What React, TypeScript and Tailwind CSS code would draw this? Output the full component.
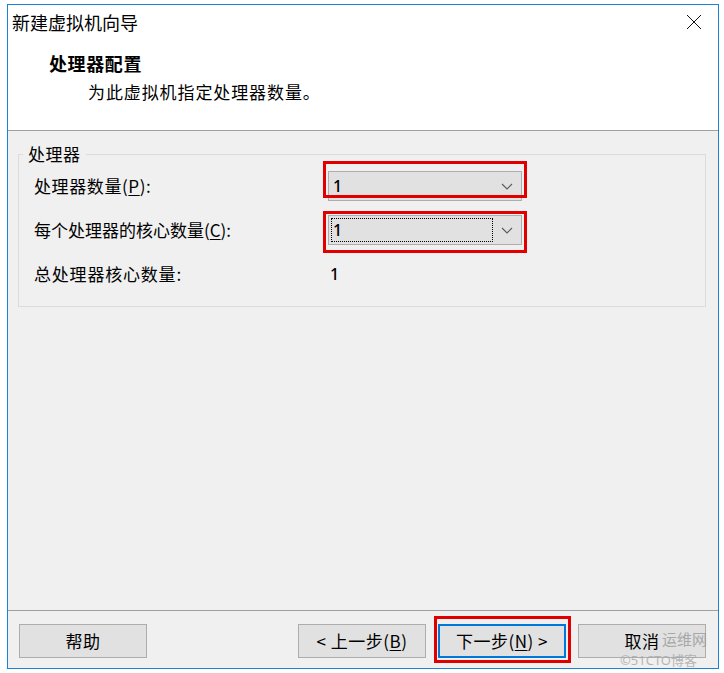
import React from "react";

const CJK = { fontFamily: "'Noto Sans CJK SC', 'Noto Sans', sans-serif" };
const LAT = { fontFamily: "'Noto Sans', 'Noto Sans CJK SC', sans-serif" };

function Chevron() {
  return (
    <svg width="12" height="7" viewBox="0 0 12 7" className="shrink-0">
      <polyline points="1,1 6,6 11,1" fill="none" stroke="#5a5a5a" strokeWidth="1.1" />
    </svg>
  );
}

function Combo({ focused }: { focused?: boolean }) {
  return (
    <div className="flex h-[30px] w-[194px] items-center border border-[#adadad] bg-[#e1e1e1]">
      {focused ? (
        <div className="ml-[2px] flex h-[24px] w-[162px] items-center border border-dotted border-black pl-[1px]">
          <span className="text-[16px] font-medium leading-none text-black" style={LAT}>1</span>
        </div>
      ) : (
        <div className="ml-[4px] flex h-[24px] w-[160px] items-center">
          <span className="text-[16px] font-medium leading-none text-black" style={LAT}>1</span>
        </div>
      )}
      <div className="flex flex-1 items-center justify-center pr-[1px]">
        <Chevron />
      </div>
    </div>
  );
}

function Btn({ children, primary }: { children: React.ReactNode; primary?: boolean }) {
  return (
    <div
      className={
        "flex h-[34px] w-[128px] items-center justify-center bg-[#e1e1e1] text-[17px] tracking-[0.5px] text-black " +
        (primary ? "border-2 border-[#0078d7]" : "border border-[#adadad]")
      }
      style={CJK}
    >
      {children}
    </div>
  );
}

export default function App() {
  return (
    <div className="h-[673px] w-[724px] bg-white pl-[7px] pt-[4px]" style={CJK}>
      <div className="flex h-[665px] w-[712px] flex-col border border-[#1883d7] bg-[#f0f0f0]">
        {/* header */}
        <div className="h-[126px] shrink-0 border-b border-[#a0a0a0] bg-white pt-[5px]">
          <div className="flex items-center justify-between pl-[4px] pr-[16px]">
            <span className="text-[18px] leading-[24px] text-black">新建虚拟机向导</span>
            <svg width="16" height="16" viewBox="0 0 16 16">
              <line x1="1" y1="1" x2="15" y2="15" stroke="#111" strokeWidth="1" />
              <line x1="15" y1="1" x2="1" y2="15" stroke="#111" strokeWidth="1" />
            </svg>
          </div>
          <div className="mt-[17px] pl-[41px] text-[18px] font-bold leading-[24px] tracking-[0.6px] text-black">处理器配置</div>
          <div className="mt-[5px] pl-[80px] text-[17px] leading-[24px] tracking-[0.9px] text-black">为此虚拟机指定处理器数量。</div>
        </div>

        {/* body */}
        <div className="flex flex-1 flex-col">
          <fieldset className="ml-[10px] mr-[12px] mt-[11px] border border-[#dcdcdc] px-0 pb-[17px] pt-[5px]">
            <legend className="ml-[4px] px-[5px] text-[17px] leading-[24px] tracking-[0.5px] text-black">处理器</legend>
            <div className="flex flex-col gap-[14px] pl-[15px]">
              <div className="flex h-[30px] items-center">
                <div className="w-[294px] text-[17px] tracking-[0.6px] text-black">
                  处理器数量(<span className="underline underline-offset-2">P</span>):
                </div>
                <div className="relative">
                  <Combo />
                  <div className="pointer-events-none absolute left-[-5px] top-[-10px] h-[37px] w-[204px] border-[3px] border-[#e00000]" />
                </div>
              </div>
              <div className="flex h-[30px] items-center">
                <div className="w-[294px] text-[17px] text-black">
                  每个处理器的核心数量(<span className="underline underline-offset-2">C</span>):
                </div>
                <div className="relative">
                  <Combo focused />
                  <div className="pointer-events-none absolute left-[-5px] top-[-4px] h-[42px] w-[204px] border-[3px] border-[#e00000]" />
                </div>
              </div>
              <div className="flex h-[30px] items-center">
                <div className="w-[296px] text-[17px] tracking-[0.8px] text-black">总处理器核心数量:</div>
                <span className="text-[16px] font-medium text-black" style={LAT}>1</span>
              </div>
            </div>
          </fieldset>

          <div className="flex-1" />

          {/* footer */}
          <div className="flex items-start border-t border-[#a0a0a0] pb-[10px] pl-[11px] pr-[12px] pt-[13px]">
            <Btn>帮助</Btn>
            <div className="flex-1" />
            <div className="flex gap-[12px]">
              <Btn>
                &lt; 上一步(<span className="underline underline-offset-2">B</span>)
              </Btn>
              <div className="relative">
                <Btn primary>
                  下一步(<span className="underline underline-offset-2">N</span>) &gt;
                </Btn>
                <div className="pointer-events-none absolute left-[-4px] top-[-8px] h-[47px] w-[137px] border-[3px] border-[#e00000]" />
              </div>
              <div className="relative">
                <Btn>取消</Btn>
                <div className="pointer-events-none absolute left-[84px] top-[4px] whitespace-nowrap text-[15px] leading-[22px] text-[#9a9a9a] opacity-80">运维网</div>
                <div className="pointer-events-none absolute left-[42px] top-[29px] whitespace-nowrap text-[13px] leading-[14px] text-[#a8a8a8] opacity-80" style={LAT}>
                  ©51CTO博客
                </div>
              </div>
            </div>
          </div>
        </div>
      </div>
    </div>
  );
}
